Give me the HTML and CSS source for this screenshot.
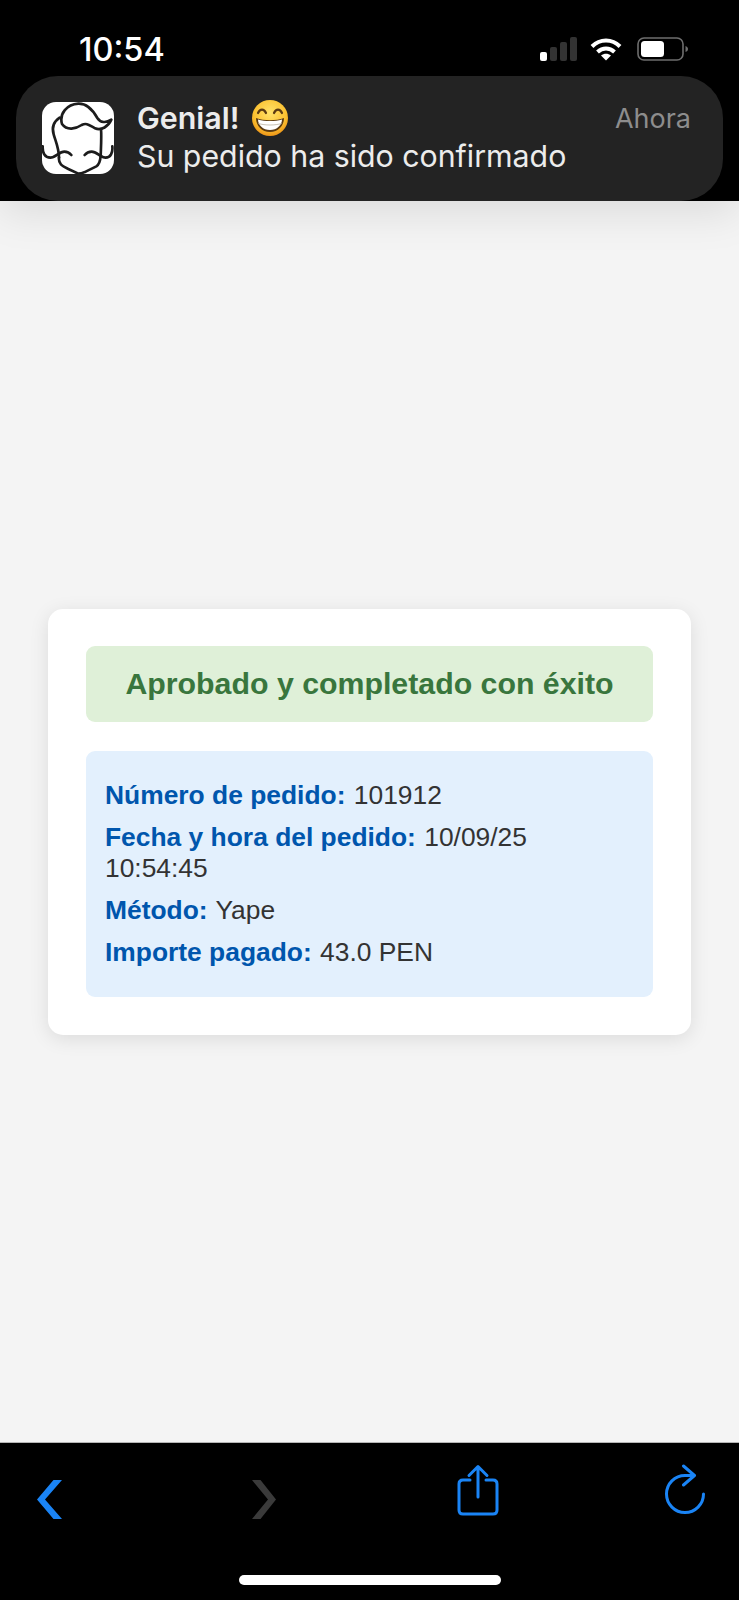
FILE: index.html
```html
<!DOCTYPE html>
<html lang="es">
<head>
    <meta charset="UTF-8">
    <meta name="viewport" content="width=device-width, initial-scale=1.0">
    <title>Pedido confirmado</title>
    <link rel="stylesheet" href="styles.css">
</head>
<body>
    <header class="top-bar">
        <div class="status-bar">
            <span class="clock">10:54</span>
            <div class="status-icons">
                <svg class="signal" width="37" height="24" viewBox="0 0 37 24">
                    <rect x="0" y="15" width="7" height="9" rx="2" fill="#fff"/>
                    <rect x="10" y="10" width="7" height="14" rx="2" fill="#333"/>
                    <rect x="20" y="5" width="7" height="19" rx="2" fill="#333"/>
                    <rect x="30" y="0" width="7" height="24" rx="2" fill="#333"/>
                </svg>
                <svg class="wifi" width="32" height="24" viewBox="0 0 32 24" fill="none" stroke="#fff" stroke-width="4">
                    <path d="M2 9.5C10 1.5 22 1.5 30 9.5"/>
                    <path d="M7.5 15C12.5 10.3 19.5 10.3 24.5 15"/>
                    <path d="M11 18.5L16 23.5L21 18.5C18 16 14 16 11 18.5Z" fill="#fff" stroke="none"/>
                </svg>
                <svg class="battery" width="51" height="24" viewBox="0 0 51 24">
                    <rect x="1" y="1" width="45" height="22" rx="6" fill="none" stroke="#6e6e6e" stroke-width="1.6"/>
                    <rect x="4" y="4" width="23" height="16" rx="3.5" fill="#fff"/>
                    <path d="M48.5 9C50 9.5 51 10.5 51 12C51 13.5 50 14.5 48.5 15Z" fill="#6e6e6e"/>
                </svg>
            </div>
        </div>
        <div class="notification">
            <svg class="app-icon" width="72" height="72" viewBox="37 37 216 216" fill="none" stroke="#1c1c1c" stroke-width="8" stroke-linecap="round" stroke-linejoin="round">
                <rect x="37" y="37" width="216" height="216" rx="42" fill="#fff" stroke="none"/>
                <path d="M97 103C88 72 112 44 146 42C172 41 190 62 203 85C212 100 230 100 245 90C236 110 216 124 196 116C180 108 172 98 156 106C138 118 112 124 97 103Z"/>
                <path d="M90 84C72 96 66 114 72 134C78 156 88 176 88 204"/>
                <path d="M214 118C216 142 214 170 213 198"/>
                <path d="M88 204C86 222 96 228 116 238L146 252C152 252 158 250 168 246L200 230C210 224 212 212 213 198"/>
                <path d="M39 170C38 190 46 204 62 204C78 204 88 186 104 186C112 186 120 190 125 196"/>
                <path d="M165 196C170 190 178 186 186 186C202 186 212 204 228 204C242 204 250 190 248 170"/>
            </svg>
            <div class="notification-body">
                <div class="notification-head">
                    <div class="notification-title">
                        Genial!
                        <svg class="emoji" width="36" height="36" viewBox="0 0 36 36">
                            <defs>
                                <radialGradient id="emojiFace" cx="50%" cy="35%" r="70%">
                                    <stop offset="0" stop-color="#ffe26a"/>
                                    <stop offset="0.65" stop-color="#fbc02f"/>
                                    <stop offset="1" stop-color="#ea8a12"/>
                                </radialGradient>
                            </defs>
                            <circle cx="18" cy="18" r="18" fill="url(#emojiFace)"/>
                            <path d="M6 13C8 8.5 12 8.5 14 13M22 13C24 8.5 28 8.5 30 13" fill="none" stroke="#5b3a12" stroke-width="2.2" stroke-linecap="round"/>
                            <path d="M4 18C12 21 24 21 32 18C32 26 26 32 18 32C10 32 4 26 4 18Z" fill="#5b3a12"/>
                            <path d="M6 19.5C13 21.5 23 21.5 30 19.5C30 25 25 30 18 30C11 30 6 25 6 19.5Z" fill="#fff"/>
                            <path d="M6.5 23.5C13 25.5 23 25.5 29.5 23.5" fill="none" stroke="#c9c2b4" stroke-width="1"/>
                        </svg>
                    </div>
                    <span class="notification-time">Ahora</span>
                </div>
                <div class="notification-text">Su pedido ha sido confirmado</div>
            </div>
        </div>
    </header>

    <main class="page">
        <div class="card">
            <div class="success-box">Aprobado y completado con éxito</div>
            <div class="info-box">
                <p><strong>Número de pedido:</strong> 101912</p>
                <p><strong>Fecha y hora del pedido:</strong> 10/09/25 10:54:45</p>
                <p><strong>Método:</strong> Yape</p>
                <p><strong>Importe pagado:</strong> 43.0 PEN</p>
            </div>
        </div>
    </main>

    <footer class="toolbar">
        <div class="toolbar-icons">
            <svg width="26" height="56" viewBox="0 0 26 56">
                <path d="M16.500 16H25L8 35.500L25 55H16.500L0 35.500Z" fill="#1a84f5"/>
            </svg>
            <svg width="28" height="56" viewBox="0 0 28 56">
                <path d="M3 16H11.500L27 35.500L11.500 55H3L19 35.500Z" fill="#3a3a3a"/>
            </svg>
            <svg width="42" height="56" viewBox="0 0 42 56" fill="none" stroke="#1a84f5" stroke-width="3" stroke-linecap="round" stroke-linejoin="round">
                <path d="M13 16H6C3.500 16 2 17.500 2 20V46C2 48.500 3.500 50 6 50H36C38.500 50 40 48.500 40 46V20C40 17.500 38.500 16 36 16H29"/>
                <path d="M21 33V3M12 11.500L21 2.500L30 11.500"/>
            </svg>
            <svg width="42" height="56" viewBox="0 0 42 56" fill="none" stroke="#1a84f5" stroke-width="3" stroke-linecap="round" stroke-linejoin="round">
                <path d="M39.500 30A18.500 18.500 0 1 1 21 11.500H29"/>
                <path d="M19.500 2L30.500 11.500L19.500 21"/>
            </svg>
        </div>
        <div class="home-indicator"></div>
    </footer>
</body>
</html>
```

FILE: styles.css
```css
* {
    margin: 0;
    padding: 0;
    box-sizing: border-box;
}

body {
    display: flex;
    flex-direction: column;
    height: 100vh;
    background: #f4f4f4;
    font-family: "Liberation Sans", Arial, sans-serif;
    overflow: hidden;
}

/* iOS chrome */
.top-bar {
    position: relative;
    z-index: 2;
    height: 201px;
    padding: 0 16px;
    background: #000;
    box-shadow: 0 12px 40px rgba(0, 0, 0, 0.1);
    font-family: Inter, "Noto Sans", sans-serif;
}

.status-bar {
    display: flex;
    justify-content: space-between;
    align-items: center;
    height: 76px;
    padding: 22px 35px 0 63px;
}

.clock {
    color: #fff;
    font-size: 32.500px;
    font-weight: 500;
}

.status-icons {
    display: flex;
    align-items: center;
    gap: 15px;
}

.status-icons svg {
    display: block;
}

.signal {
    margin-right: -2px;
}

.notification {
    display: flex;
    align-items: flex-start;
    gap: 23px;
    height: 125px;
    padding: 24px 32px 0 26px;
    background: #232323;
    border-radius: 42px;
}

.app-icon {
    flex-shrink: 0;
    margin-top: 2px;
}

.notification-body {
    flex: 1;
}

.notification-head {
    display: flex;
    justify-content: space-between;
    align-items: center;
    height: 36px;
}

.notification-title {
    display: flex;
    align-items: center;
    gap: 13px;
    color: #ececec;
    font-size: 30.400px;
    font-weight: 600;
}

.notification-time {
    color: #8d8d8d;
    font-size: 27px;
}

.notification-text {
    margin-top: 2px;
    color: #ececec;
    font-size: 30.300px;
    white-space: nowrap;
}

/* Order result */
.page {
    flex: 1;
    display: flex;
    align-items: center;
    justify-content: center;
    padding: 0 48px;
}

.card {
    width: 100%;
    padding: 37px 38px 38px;
    background: #fff;
    border-radius: 15px;
    box-shadow: 0 4px 19px rgba(0, 0, 0, 0.1);
}

.success-box {
    height: 76px;
    margin-bottom: 29px;
    background: #dff0d8;
    border-radius: 9px;
    color: #39763d;
    font-size: 30.300px;
    font-weight: 700;
    line-height: 76px;
    text-align: center;
}

.info-box {
    display: flex;
    flex-direction: column;
    gap: 11px;
    padding: 29px 19px;
    background: #e3f0fd;
    border-radius: 9px;
    color: #333;
    font-size: 26.400px;
    line-height: 31px;
}

.info-box strong {
    margin-right: 1px;
    color: #0056ad;
}

.toolbar {
    height: 158px;
    padding-top: 21px;
    background: #000;
    border-top: 1px solid #b5b5b5;
}

.toolbar-icons {
    display: grid;
    grid-template-columns: 212px 208px 207px 42px;
    height: 56px;
    padding-left: 37px;
}

.toolbar-icons svg {
    display: block;
}

.home-indicator {
    width: 262px;
    height: 10px;
    margin: 55px auto 0;
    background: #fff;
    border-radius: 5px;
}
```
